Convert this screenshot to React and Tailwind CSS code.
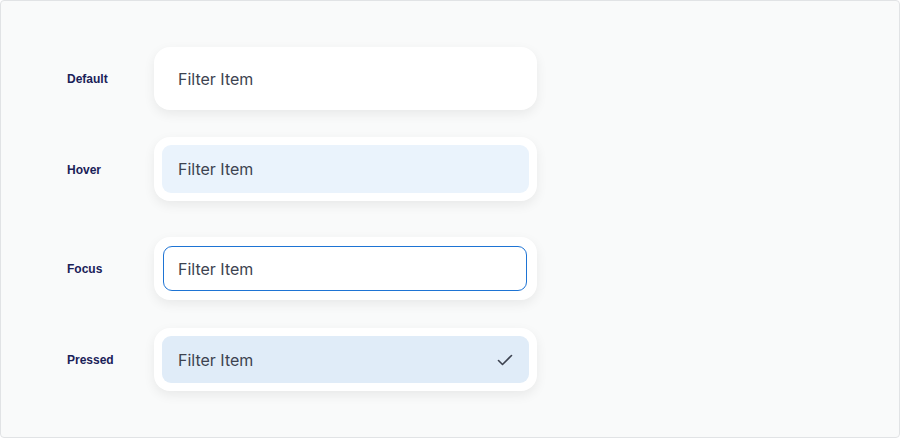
import React from 'react';

const rows = [
  { label: 'Default', state: 'default', mt: 'mt-[46px]' },
  { label: 'Hover', state: 'hover', mt: 'mt-[27px]' },
  { label: 'Focus', state: 'focus', mt: 'mt-[36px]' },
  { label: 'Pressed', state: 'pressed', mt: 'mt-[28px]' },
];

const Check = () => (
  <svg width="16" height="16" viewBox="0 0 16 16" fill="none">
    <path d="M1.5 8.5 L5.5 12.5 L14.5 3.5" stroke="#3d4350" strokeWidth="1.6" strokeLinecap="round" strokeLinejoin="round" />
  </svg>
);

const FilterItem = ({ state }) => {
  if (state === 'default') {
    return (
      <div className="w-[383px] h-[63px] rounded-[16px] bg-white shadow-[0_4px_12px_rgba(0,0,0,0.07)] flex items-center pl-[24px] text-[16px] text-[#3d4350]">
        Filter Item
      </div>
    );
  }
  const outer = {
    hover: 'h-[64px] p-[8px]',
    focus: 'h-[63px] pt-[9px] pb-[9px] pl-[9px] pr-[10px]',
    pressed: 'h-[63px] p-[8px]',
  }[state];
  const inner = {
    hover: 'bg-[#eaf3fc] pl-[16px]',
    focus: 'bg-white border border-[#1e74d4] pl-[14px]',
    pressed: 'bg-[#e0ecf8] pl-[16px]',
  }[state];
  return (
    <div className={`w-[383px] rounded-[16px] bg-white shadow-[0_4px_12px_rgba(0,0,0,0.07)] ${outer}`}>
      <div className={`h-full rounded-[9px] flex items-center justify-between pr-[16px] text-[16px] text-[#3d4350] ${inner}`}>
        <span>Filter Item</span>
        {state === 'pressed' && <Check />}
      </div>
    </div>
  );
};

export default function App() {
  return (
    <div className="w-[900px] h-[438px] bg-[#f9fafa] border border-[#e1e3e5] rounded-[4px] overflow-hidden" style={{ fontFamily: 'Inter, "Noto Sans", sans-serif' }}>
      <div className="flex flex-col pl-[66px]">
        {rows.map((r) => (
          <div key={r.label} className={`flex items-center ${r.mt}`}>
            <div className="w-[87px] pt-[1px] text-[12px] font-bold text-[#1a2158]" style={{ fontFamily: '"Liberation Sans", Arial, sans-serif' }}>{r.label}</div>
            <FilterItem state={r.state} />
          </div>
        ))}
      </div>
    </div>
  );
}
